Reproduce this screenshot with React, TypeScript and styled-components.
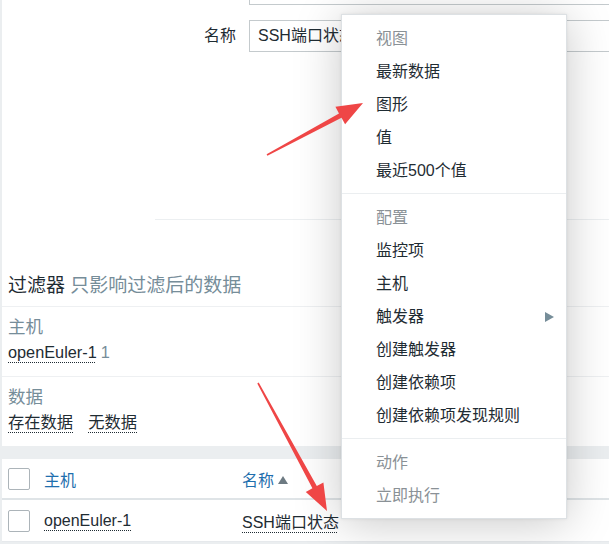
import React from "react";
import styled, { createGlobalStyle } from "styled-components";

const Global = createGlobalStyle`
  html, body { margin: 0; padding: 0; background: #ebeef0; }
  body { font-family: "Liberation Sans", "Noto Sans CJK SC", sans-serif; font-size: 16px; color: #1f2c33; }
  * { box-sizing: border-box; }
`;

const Screen = styled.div`
  position: relative;
  width: 609px;
  height: 544px;
  overflow: hidden;
  background: #ebeef0;
  padding-left: 2px;
`;

const Main = styled.div`
  display: flex;
  flex-direction: column;
`;

const FormSection = styled.section`
  background: #fff;
  height: 220px;
  overflow: hidden;
  display: flex;
  flex-direction: column;
`;

const FieldRow = styled.div<{ $mt: number }>`
  display: grid;
  grid-template-columns: 247px 1fr;
  align-items: center;
  margin-top: ${(p) => p.$mt}px;
`;

const FieldLabel = styled.label`
  text-align: right;
  padding-right: 13px;
  line-height: 32px;
`;

const TextInput = styled.div`
  height: 32px;
  border: 1px solid #c4cacd;
  border-right: none;
  background: #fff;
  padding-left: 8px;
  line-height: 30px;
  white-space: nowrap;
`;

const FormDivider = styled.div`
  margin-top: auto;
  margin-left: 153px;
  height: 1px;
  background: #eceff1;
`;

const FilterPanel = styled.section`
  background: #fff;
  display: flex;
  flex-direction: column;
`;

const FilterTitle = styled.h2`
  margin: 0;
  padding: 54px 0 8px 6px;
  font-size: 19px;
  font-weight: normal;
  line-height: 24px;
  border-bottom: 1px solid #eef0f2;
`;

const Hint = styled.span`
  color: #768d99;
`;

const FilterGroup = styled.div<{ $last?: boolean }>`
  display: flex;
  flex-direction: column;
  gap: 3px;
  padding: 9px 0 13px 6px;
  border-bottom: ${(p) => (p.$last ? "none" : "1px solid #eef0f2")};
`;

const GroupLabel = styled.div`
  color: #768d99;
  font-size: 17.5px;
  line-height: 22px;
`;

const GroupValues = styled.div`
  display: flex;
  gap: 15px;
  line-height: 22px;
  font-size: 16.3px;
`;

const DottedLink = styled.span`
  color: #1f2c33;
  text-decoration: underline dotted #1f2c33;
  text-decoration-thickness: 1px;
  text-underline-offset: 4px;
`;

const Count = styled.span`
  color: #768d99;
  margin-left: 4px;
`;

const Gap = styled.div`
  height: 13px;
  background: #ebeef0;
`;

const Table = styled.div`
  background: #fff;
  display: flex;
  flex-direction: column;
`;

const TRow = styled.div<{ $head?: boolean }>`
  display: grid;
  grid-template-columns: 42px 198px 1fr;
  align-items: center;
  height: ${(p) => (p.$head ? 41 : 42)}px;
  border-bottom: ${(p) => (p.$head ? "2px solid #dfe4e7" : "1px solid #e6e9ec")};
`;

const CheckCell = styled.div`
  padding-left: 6px;
  display: flex;
  align-items: center;
`;

const Checkbox = styled.span`
  width: 22px;
  height: 22px;
  border: 1px solid #acb4b9;
  border-radius: 2px;
  background: #fff;
`;

const HeadLink = styled.span`
  color: #1f6fae;
  display: inline-flex;
  align-items: center;
  gap: 4px;
`;

const SortUp = styled.span`
  width: 0;
  height: 0;
  border-left: 5px solid transparent;
  border-right: 5px solid transparent;
  border-bottom: 8px solid #6d7a82;
  margin-top: 2px;
`;

const Menu = styled.nav`
  position: absolute;
  left: 341px;
  top: 14px;
  width: 226px;
  background: #fff;
  border: 1px solid #dde1e4;
  padding: 7px 0 6px;
  box-shadow: 0 4px 44px rgba(0, 0, 0, 0.22), 0 0 3px rgba(0, 0, 0, 0.08);
  display: flex;
  flex-direction: column;
`;

const MenuHeader = styled.div`
  color: #8a9196;
  height: 33px;
  line-height: 33px;
  padding-left: 34px;
`;

const MenuItem = styled.div<{ $disabled?: boolean }>`
  position: relative;
  height: 33px;
  line-height: 33px;
  padding-left: 34px;
  color: ${(p) => (p.$disabled ? "#8a9196" : "#1f2c33")};
  white-space: nowrap;
`;

const SubArrow = styled.span`
  position: absolute;
  right: 12px;
  top: 12px;
  width: 0;
  height: 0;
  border-top: 5px solid transparent;
  border-bottom: 5px solid transparent;
  border-left: 9px solid #768d99;
`;

const MenuSep = styled.div`
  height: 1px;
  background: #ebeef0;
  margin: 6px 0 7px;
`;

const Annotations = styled.svg`
  position: absolute;
  left: 0;
  top: 0;
  pointer-events: none;
`;

const menu = [
  {
    header: "视图",
    items: [{ t: "最新数据" }, { t: "图形" }, { t: "值" }, { t: "最近500个值" }],
  },
  {
    header: "配置",
    items: [
      { t: "监控项" },
      { t: "主机" },
      { t: "触发器", sub: true },
      { t: "创建触发器" },
      { t: "创建依赖项" },
      { t: "创建依赖项发现规则" },
    ],
  },
  {
    header: "动作",
    items: [{ t: "立即执行", disabled: true }],
  },
];

export default function App() {
  return (
    <>
      <Global />
      <Screen>
        <Main>
          <FormSection>
            <FieldRow $mt={-27}>
              <FieldLabel />
              <TextInput />
            </FieldRow>
            <FieldRow $mt={15}>
              <FieldLabel>名称</FieldLabel>
              <TextInput>SSH端口状态</TextInput>
            </FieldRow>
            <FormDivider />
          </FormSection>
          <FilterPanel>
            <FilterTitle>
              过滤器 <Hint>只影响过滤后的数据</Hint>
            </FilterTitle>
            <FilterGroup>
              <GroupLabel>主机</GroupLabel>
              <GroupValues>
                <span>
                  <DottedLink>openEuler-1</DottedLink>
                  <Count>1</Count>
                </span>
              </GroupValues>
            </FilterGroup>
            <FilterGroup $last>
              <GroupLabel>数据</GroupLabel>
              <GroupValues>
                <DottedLink>存在数据</DottedLink>
                <DottedLink>无数据</DottedLink>
              </GroupValues>
            </FilterGroup>
          </FilterPanel>
          <Gap />
          <Table>
            <TRow $head>
              <CheckCell>
                <Checkbox />
              </CheckCell>
              <HeadLink>主机</HeadLink>
              <HeadLink>
                名称
                <SortUp />
              </HeadLink>
            </TRow>
            <TRow>
              <CheckCell>
                <Checkbox />
              </CheckCell>
              <span>
                <DottedLink>openEuler-1</DottedLink>
              </span>
              <span>
                <DottedLink>SSH端口状态</DottedLink>
              </span>
            </TRow>
          </Table>
        </Main>

        <Menu>
          {menu.map((sec, i) => (
            <React.Fragment key={sec.header}>
              {i > 0 && <MenuSep />}
              <MenuHeader>{sec.header}</MenuHeader>
              {sec.items.map((it: { t: string; sub?: boolean; disabled?: boolean }) => (
                <MenuItem key={it.t} $disabled={it.disabled}>
                  {it.t}
                  {it.sub && <SubArrow />}
                </MenuItem>
              ))}
            </React.Fragment>
          ))}
        </Menu>

        <Annotations width={609} height={544} viewBox="0 0 609 544">
          <polygon
            fill="#ef4646"
            points="266.6,154.3 339.0,113.4 335.4,106.8 363,103 345.1,124.3 341.5,117.8 267.4,155.7"
          />
          <polygon
            fill="#ef4646"
            points="258.7,382.6 316.8,486.0 323.4,482.4 327,511 305.8,491.9 312.4,488.3 257.3,383.4"
          />
        </Annotations>
      </Screen>
    </>
  );
}
